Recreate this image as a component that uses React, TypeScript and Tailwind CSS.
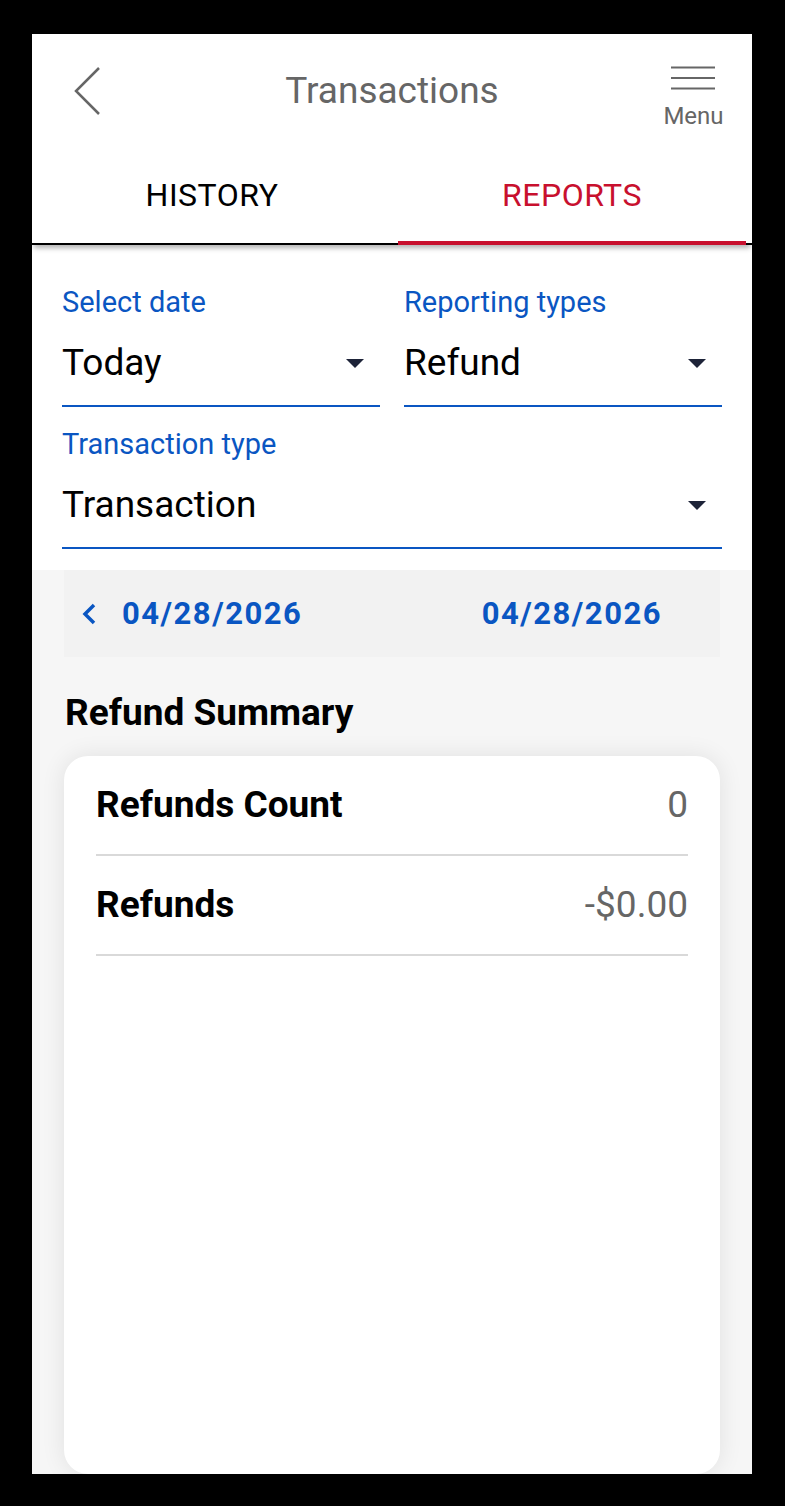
const BLUE = "text-[#0a56c2]";

const Caret: React.FC = () => (
  <svg width="18" height="9" viewBox="0 0 18 9">
    <path d="M0 0h18L9 9z" fill="#1d2338" />
  </svg>
);

const Field: React.FC<{ label: string; value: string }> = ({ label, value }) => (
  <div className="flex flex-col border-b-2 border-[#0a56c2] pb-[20px]">
    <span className={`text-[29px] leading-[34px] ${BLUE}`}>{label}</span>
    <div className="mt-[22px] flex items-center justify-between pr-[16px]">
      <span className="text-[37px] leading-[44px] text-black">{value}</span>
      <Caret />
    </div>
  </div>
);

const SummaryRow: React.FC<{ label: string; value: string }> = ({ label, value }) => (
  <div className="flex h-[100px] items-center justify-between border-b-2 border-[#d9d9d9]">
    <span className="text-[37px] font-bold leading-[44px] text-black">{label}</span>
    <span className="text-[37px] leading-[44px] text-[#666666]">{value}</span>
  </div>
);

const App: React.FC = () => {
  return (
    <div className="h-[1506px] w-[785px] bg-black pl-[32px] pt-[34px] font-['Roboto',sans-serif]">
      <div className="flex h-[1440px] w-[720px] flex-col overflow-hidden bg-[#f6f6f6]">
        {/* header */}
        <div className="flex h-[112px] items-start justify-between bg-white">
          <div className="w-[120px] pl-[42px] pt-[32px]">
            <svg width="30" height="50" viewBox="0 0 30 50" fill="none">
              <path d="M25 2 2 25l23 23" stroke="#666666" strokeWidth="2.5" />
            </svg>
          </div>
          <h1 className="mt-[35px] text-[37px] leading-[44px] text-[#666666]">Transactions</h1>
          <div className="flex w-[120px] flex-col items-end pr-[30px] pt-[32px]">
            <div className="flex w-[57px] flex-col items-center">
              <svg width="44" height="24" viewBox="0 0 44 24">
                <path d="M0 1.5h44M0 12h44M0 22.5h44" stroke="#666666" strokeWidth="2" />
              </svg>
              <span className="mt-[12px] text-[24px] leading-[28px] text-[#666666]">Menu</span>
            </div>
          </div>
        </div>

        {/* tabs */}
        <div className="relative z-10 grid h-[99px] grid-cols-2 border-b-2 border-black bg-white shadow-[0_5px_5px_-2px_rgba(0,0,0,0.3)]">
          <div className="flex items-center justify-center text-[32px] tracking-[0.5px] text-black">HISTORY</div>
          <div className="relative flex items-center justify-center text-[32px] tracking-[0.5px] text-[#c8102e]">
            REPORTS
            <span className="absolute -bottom-[2px] left-[6px] right-[6px] h-[4px] bg-[#c8102e]" />
          </div>
        </div>

        {/* filters */}
        <div className="flex flex-col gap-[20px] bg-white px-[30px] pb-[21px] pt-[40px]">
          <div className="grid grid-cols-2 gap-[24px]">
            <Field label="Select date" value="Today" />
            <Field label="Reporting types" value="Refund" />
          </div>
          <Field label="Transaction type" value="Transaction" />
        </div>

        {/* date range */}
        <div className="mx-[32px] flex h-[87px] items-center justify-between bg-[#f2f2f2] pl-[18px] pr-[58px]">
          <div className="flex items-center gap-[24px]">
            <svg width="16" height="22" viewBox="0 0 16 22" fill="none">
              <path d="M12 2 3 11l9 9" stroke="#0a56c2" strokeWidth="3.5" />
            </svg>
            <span className={`text-[31px] font-bold leading-[36px] tracking-[1.5px] ${BLUE}`}>04/28/2026</span>
          </div>
          <span className={`text-[31px] font-bold leading-[36px] tracking-[1.5px] ${BLUE}`}>04/28/2026</span>
        </div>

        <h2 className="mx-[33px] mt-[34px] text-[37px] font-bold leading-[44px] text-black">Refund Summary</h2>

        {/* summary card */}
        <div className="mx-[32px] mt-[21px] flex-1 rounded-[24px] bg-white px-[32px] shadow-[0_0_24px_rgba(0,0,0,0.09)]">
          <SummaryRow label="Refunds Count" value="0" />
          <SummaryRow label="Refunds" value="-$0.00" />
        </div>
      </div>
    </div>
  );
};

export default App;
